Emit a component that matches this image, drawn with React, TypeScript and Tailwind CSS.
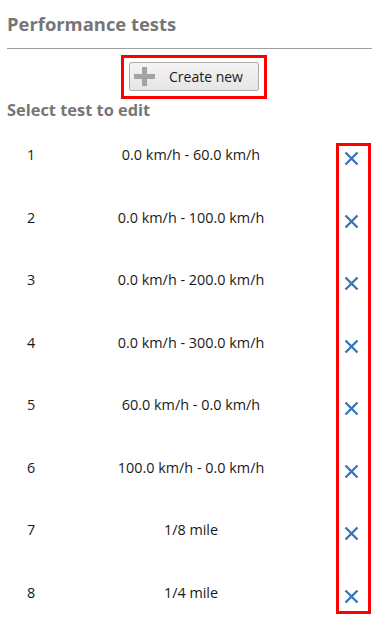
import React from 'react';

const tests = [
  '0.0 km/h - 60.0 km/h',
  '0.0 km/h - 100.0 km/h',
  '0.0 km/h - 200.0 km/h',
  '0.0 km/h - 300.0 km/h',
  '60.0 km/h - 0.0 km/h',
  '100.0 km/h - 0.0 km/h',
  '1/8 mile',
  '1/4 mile',
];

function PlusIcon() {
  return (
    <svg width="21" height="19" viewBox="0 0 21 19">
      <rect x="8" y="0" width="5" height="19" fill="#a3a3a3" />
      <rect x="0" y="7" width="21" height="5" fill="#a3a3a3" />
    </svg>
  );
}

function CloseIcon() {
  return (
    <svg width="15" height="15" viewBox="0 0 15 15">
      <path d="M1.5 1.5 L13.5 13.5 M13.5 1.5 L1.5 13.5" stroke="#3a76b6" strokeWidth="2.4" strokeLinecap="butt" />
    </svg>
  );
}

export default function App() {
  return (
    <div className="w-[372px] h-[628px] bg-white overflow-hidden" style={{ fontFamily: '"Open Sans", "Noto Sans", sans-serif' }}>
      <div className="pl-[7px]">
        <h1 className="pt-[12px] h-[48px] text-[18.4px] font-bold text-[#767676] leading-[24px]">Performance tests</h1>
        <div className="h-px bg-[#a0a0a0]" />
      </div>

      <div className="mt-[6px] ml-[121px] w-[146px] border-[3px] border-[#ff0000] pt-[4px] pb-[5px] px-[5px]">
        <button className="w-[130px] h-[29px] flex items-center border border-[#adadad] rounded-[2px] bg-gradient-to-b from-[#f3f3f3] to-[#e6e6e6] pl-[4px]">
          <PlusIcon />
          <span className="ml-[14px] text-[14px] text-[#1a1a1a]">Create new</span>
        </button>
      </div>

      <div className="pl-[7px] -mt-[1px] h-[26px] text-[16.4px] font-bold text-[#767676] leading-[24px]">Select test to edit</div>

      <div className="flex">
        <div className="w-[336px]">
          {tests.map((t, i) => (
            <div key={i} className="h-[62.5px] flex items-center text-[14.4px] text-[#1a1a1a]">
              <span className="w-[60px] pl-[27px]">{i + 1}</span>
              <span className="w-[262px] text-center">{t}</span>
            </div>
          ))}
        </div>
        <div className="mt-[19px] h-[471px] w-[35px] border-[3px] border-[#ff0000] pl-[5px] pt-[5px] flex flex-col gap-[47.5px]">
          {tests.map((_, i) => (
            <CloseIcon key={i} />
          ))}
        </div>
      </div>
    </div>
  );
}
